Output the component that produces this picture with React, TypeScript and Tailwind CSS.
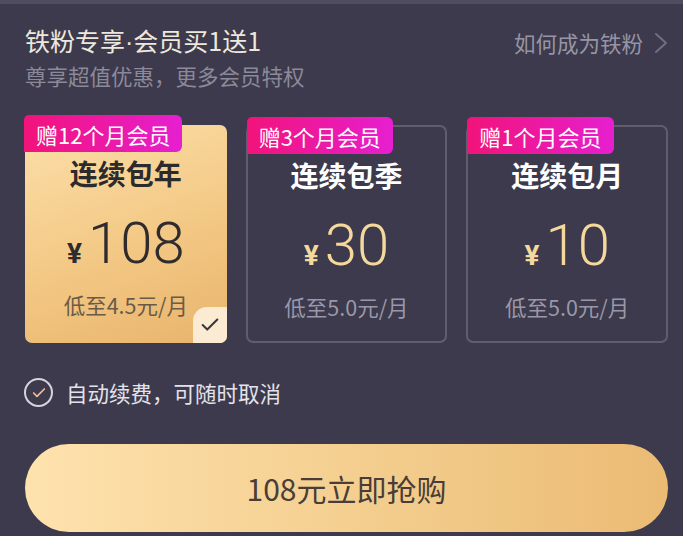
import { Check } from 'lucide-react';

const plans = [
  { gift: '赠12个月会员', name: '连续包年', price: '108', per: '低至4.5元/月', active: true },
  { gift: '赠3个月会员', name: '连续包季', price: '30', per: '低至5.0元/月', active: false },
  { gift: '赠1个月会员', name: '连续包月', price: '10', per: '低至5.0元/月', active: false },
];

function PlanCard({ plan }: { plan: (typeof plans)[number] }) {
  return (
    <div
      className={`relative h-[218px] rounded-[7px] flex flex-col items-center ${
        plan.active
          ? 'bg-[linear-gradient(160deg,#fcdfaa_0%,#f3c884_55%,#e8b46c_100%)]'
          : 'border-2 border-[#5f5d70]'
      }`}
    >
      <div className="absolute -top-[10px] -left-px h-[37px] px-3 flex items-center rounded-tl-[5px] rounded-tr-[6px] rounded-br-[6px] bg-[linear-gradient(90deg,#f2137a,#e61fd0)] text-white text-[22px] leading-none">
        {plan.gift}
      </div>
      <div
        className={`mt-[34px] text-[28px] leading-none font-bold ${
          plan.active ? 'text-[#2d2a2b]' : 'text-white'
        }`}
      >
        {plan.name}
      </div>
      <div
        className={`mt-[27px] flex items-baseline font-['Roboto','Noto_Sans_CJK_SC',sans-serif] ${
          plan.active ? 'text-[#2f2b2e]' : 'text-[#f5d99c]'
        }`}
      >
        <span className="text-[28px] font-bold mr-[6px]">¥</span>
        <span className="text-[58px] leading-none font-light">{plan.price}</span>
      </div>
      <div
        className={`mt-[19px] text-[21.5px] leading-none ${
          plan.active ? 'text-[#6b5a47]' : 'text-[#9a98a8]'
        }`}
      >
        {plan.per}
      </div>
      {plan.active && (
        <div className="absolute right-0 bottom-0 w-[34px] h-[36px] rounded-tl-[14px] rounded-br-[7px] bg-[#fbebd2] flex items-center justify-center">
          <Check size={22} strokeWidth={2.2} className="text-[#3b3540]" />
        </div>
      )}
    </div>
  );
}

export default function App() {
  return (
    <div className="w-[683px] h-[536px] overflow-hidden bg-[#3c3a4c] font-['Noto_Sans_CJK_SC','Noto_Sans',sans-serif] flex flex-col">
      <div className="h-[4px] bg-[#4e4c60]" />

      <div className="pl-[25px] pr-[15px] pt-[20px] flex justify-between items-start">
        <div>
          <div className="text-[25px] leading-[32px] text-[#eee8dc]">
            铁粉专享<span className="font-['Liberation_Sans',sans-serif]">·</span>会员买1送1
          </div>
          <div className="mt-[3px] text-[21.5px] leading-[30px] text-[#8b899a]">尊享超值优惠，更多会员特权</div>
        </div>
        <div className="mt-[4px] flex items-center gap-[11px] text-[21.5px] leading-[30px] text-[#9795a5]">
          如何成为铁粉
          <svg width="14" height="22" viewBox="0 0 14 22" fill="none">
            <polyline points="2,2 12,11 2,20" stroke="#706e80" strokeWidth="2" strokeLinecap="round" strokeLinejoin="round" />
          </svg>
        </div>
      </div>

      <div className="mt-[34px] pl-[25px] pr-[15px] grid grid-cols-3 gap-[19px]">
        {plans.map((p) => (
          <PlanCard key={p.name} plan={p} />
        ))}
      </div>

      <div className="mt-[35px] px-[24px] flex items-center gap-[13px]">
        <div className="w-[29px] h-[29px] rounded-full border-2 border-[#d6d4dc] flex items-center justify-center">
          <Check size={16} strokeWidth={2.6} className="text-[#f2b89a]" />
        </div>
        <div className="text-[21.5px] leading-none text-[#e4e2ea]">自动续费，可随时取消</div>
      </div>

      <div className="mt-[37px] ml-[25px] mr-[15px] h-[88px] rounded-full bg-[linear-gradient(90deg,#fee2ae,#f4cf90_50%,#ebbb74)] flex items-center justify-center">
        <span className="text-[30px] text-[#4a3d37]">108元立即抢购</span>
      </div>
    </div>
  );
}
